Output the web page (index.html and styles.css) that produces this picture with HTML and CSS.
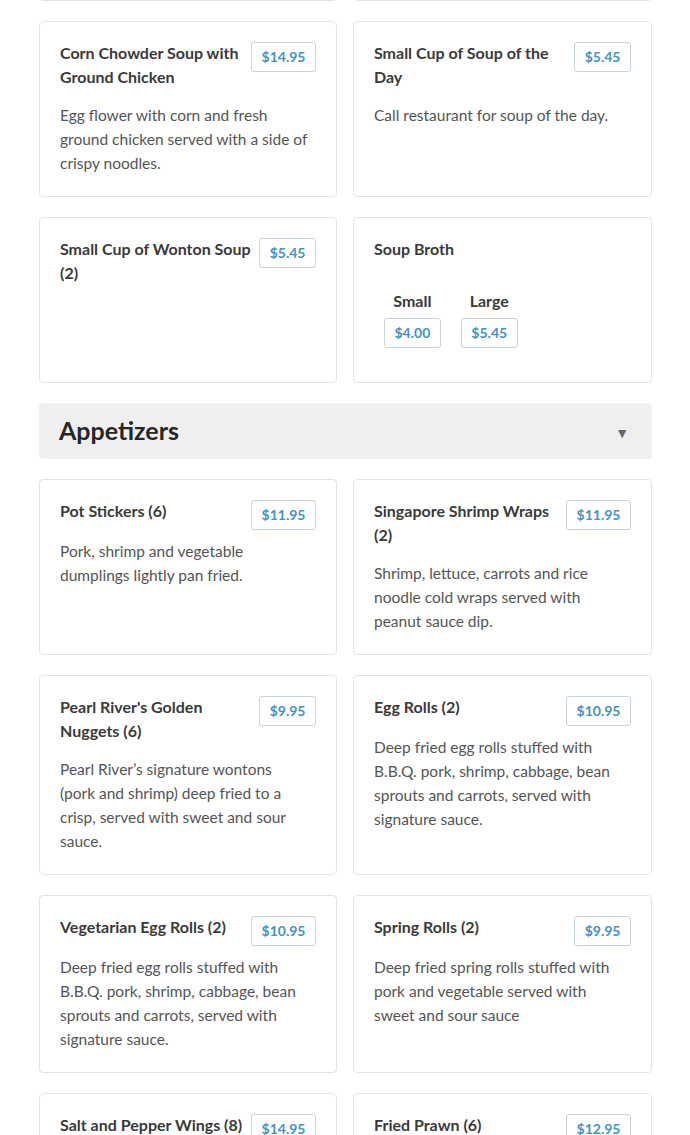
FILE: index.html
```html
<!DOCTYPE html>
<html>
<head>
<meta charset="utf-8">
<link rel="stylesheet" href="styles.css">
</head>
<body>
<div class="page">
  <div class="grid tail">
    <div class="card"></div>
    <div class="card"></div>
  </div>

  <div class="grid">
    <div class="card">
      <div class="head"><h3 class="title">Corn Chowder Soup with Ground Chicken</h3><span class="price">$14.95</span></div>
      <p class="desc">Egg flower with corn and fresh ground chicken served with a side of crispy noodles.</p>
    </div>
    <div class="card">
      <div class="head"><h3 class="title">Small Cup of Soup of the Day</h3><span class="price">$5.45</span></div>
      <p class="desc">Call restaurant for soup of the day.</p>
    </div>
    <div class="card">
      <div class="head"><h3 class="title">Small Cup of Wonton Soup (2)</h3><span class="price">$5.45</span></div>
    </div>
    <div class="card">
      <div class="head"><h3 class="title">Soup Broth</h3></div>
      <div class="sizes">
        <div class="size"><span class="size-label">Small</span><span class="price">$4.00</span></div>
        <div class="size"><span class="size-label">Large</span><span class="price">$5.45</span></div>
      </div>
    </div>
  </div>

  <div class="section">
    <h2 class="section-title">Appetizers</h2>
    <span class="arrow">&#9660;</span>
  </div>

  <div class="grid">
    <div class="card">
      <div class="head"><h3 class="title">Pot Stickers (6)</h3><span class="price">$11.95</span></div>
      <p class="desc">Pork, shrimp and vegetable dumplings lightly pan fried.</p>
    </div>
    <div class="card">
      <div class="head"><h3 class="title">Singapore Shrimp Wraps (2)</h3><span class="price">$11.95</span></div>
      <p class="desc">Shrimp, lettuce, carrots and rice noodle cold wraps served with peanut sauce dip.</p>
    </div>
    <div class="card">
      <div class="head"><h3 class="title">Pearl River's Golden Nuggets (6)</h3><span class="price">$9.95</span></div>
      <p class="desc">Pearl River’s signature wontons (pork and shrimp) deep fried to a crisp, served with sweet and sour sauce.</p>
    </div>
    <div class="card">
      <div class="head"><h3 class="title">Egg Rolls (2)</h3><span class="price">$10.95</span></div>
      <p class="desc">Deep fried egg rolls stuffed with B.B.Q. pork, shrimp, cabbage, bean sprouts and carrots, served with signature sauce.</p>
    </div>
    <div class="card">
      <div class="head"><h3 class="title">Vegetarian Egg Rolls (2)</h3><span class="price">$10.95</span></div>
      <p class="desc">Deep fried egg rolls stuffed with B.B.Q. pork, shrimp, cabbage, bean sprouts and carrots, served with signature sauce.</p>
    </div>
    <div class="card">
      <div class="head"><h3 class="title">Spring Rolls (2)</h3><span class="price">$9.95</span></div>
      <p class="desc">Deep fried spring rolls stuffed with pork and vegetable served with sweet and sour sauce</p>
    </div>
    <div class="card">
      <div class="head"><h3 class="title">Salt and Pepper Wings (8)</h3><span class="price">$14.95</span></div>
      <p class="desc">Crispy chicken wings tossed with salt, pepper, garlic and jalapeño.</p>
    </div>
    <div class="card">
      <div class="head"><h3 class="title">Fried Prawn (6)</h3><span class="price">$12.95</span></div>
      <p class="desc">Lightly battered prawns fried golden and served with sweet and sour sauce.</p>
    </div>
  </div>
</div>
</body>
</html>
```

FILE: styles.css
```css
html, body {
  margin: 0;
  padding: 0;
  background: #ffffff;
}

body {
  font-family: Lato, "Open Sans", Arial, sans-serif;
  color: #333;
  overflow: hidden;
}

.page {
  padding: 0 38px 0 39px;
}

.grid {
  display: grid;
  grid-template-columns: 298px 299px;
  column-gap: 16px;
  row-gap: 20px;
  margin-bottom: 20px;
}

.tail {
  margin-top: -39px;
}

.tail .card {
  height: 40px;
  padding: 0;
  box-sizing: border-box;
}

.card {
  border: 1px solid #e4e4e4;
  border-radius: 4px;
  padding: 19px 20px 21px;
  background: #fff;
}

.head {
  display: flex;
  align-items: flex-start;
  justify-content: space-between;
  gap: 6px;
  min-height: 26px;
}

.title {
  margin: 0;
  font-size: 16px;
  line-height: 24px;
  font-weight: 700;
  color: #3a3a3a;
}

.price {
  flex: none;
  display: inline-block;
  box-sizing: border-box;
  height: 30px;
  line-height: 28px;
  padding: 0 9.5px;
  border: 1px solid #c4d3de;
  border-radius: 3px;
  font-size: 14px;
  font-weight: 700;
  color: #4592c6;
  margin-top: 1px;
  margin-bottom: -7px;
}

.desc {
  margin: 14px 0 0;
  padding-right: 7px;
  font-size: 15.5px;
  line-height: 24px;
  color: #555;
}

.sizes {
  display: flex;
  gap: 20px;
  padding: 26px 10px 13px;
}

.size {
  display: flex;
  flex-direction: column;
  align-items: center;
  gap: 5px;
}

.size .price {
  margin: 0;
}

.size-label {
  font-size: 16px;
  line-height: 24px;
  font-weight: 700;
  color: #3a3a3a;
}

.section {
  display: flex;
  align-items: center;
  justify-content: space-between;
  height: 56px;
  box-sizing: border-box;
  padding: 0 23px 3px 20px;
  background: #efefef;
  border-radius: 4px;
  margin-bottom: 20px;
}

.section-title {
  margin: 0;
  font-size: 25px;
  font-weight: 700;
  color: #262626;
}

.arrow {
  font-size: 14px;
  color: #666;
  padding-top: 5px;
}
```
